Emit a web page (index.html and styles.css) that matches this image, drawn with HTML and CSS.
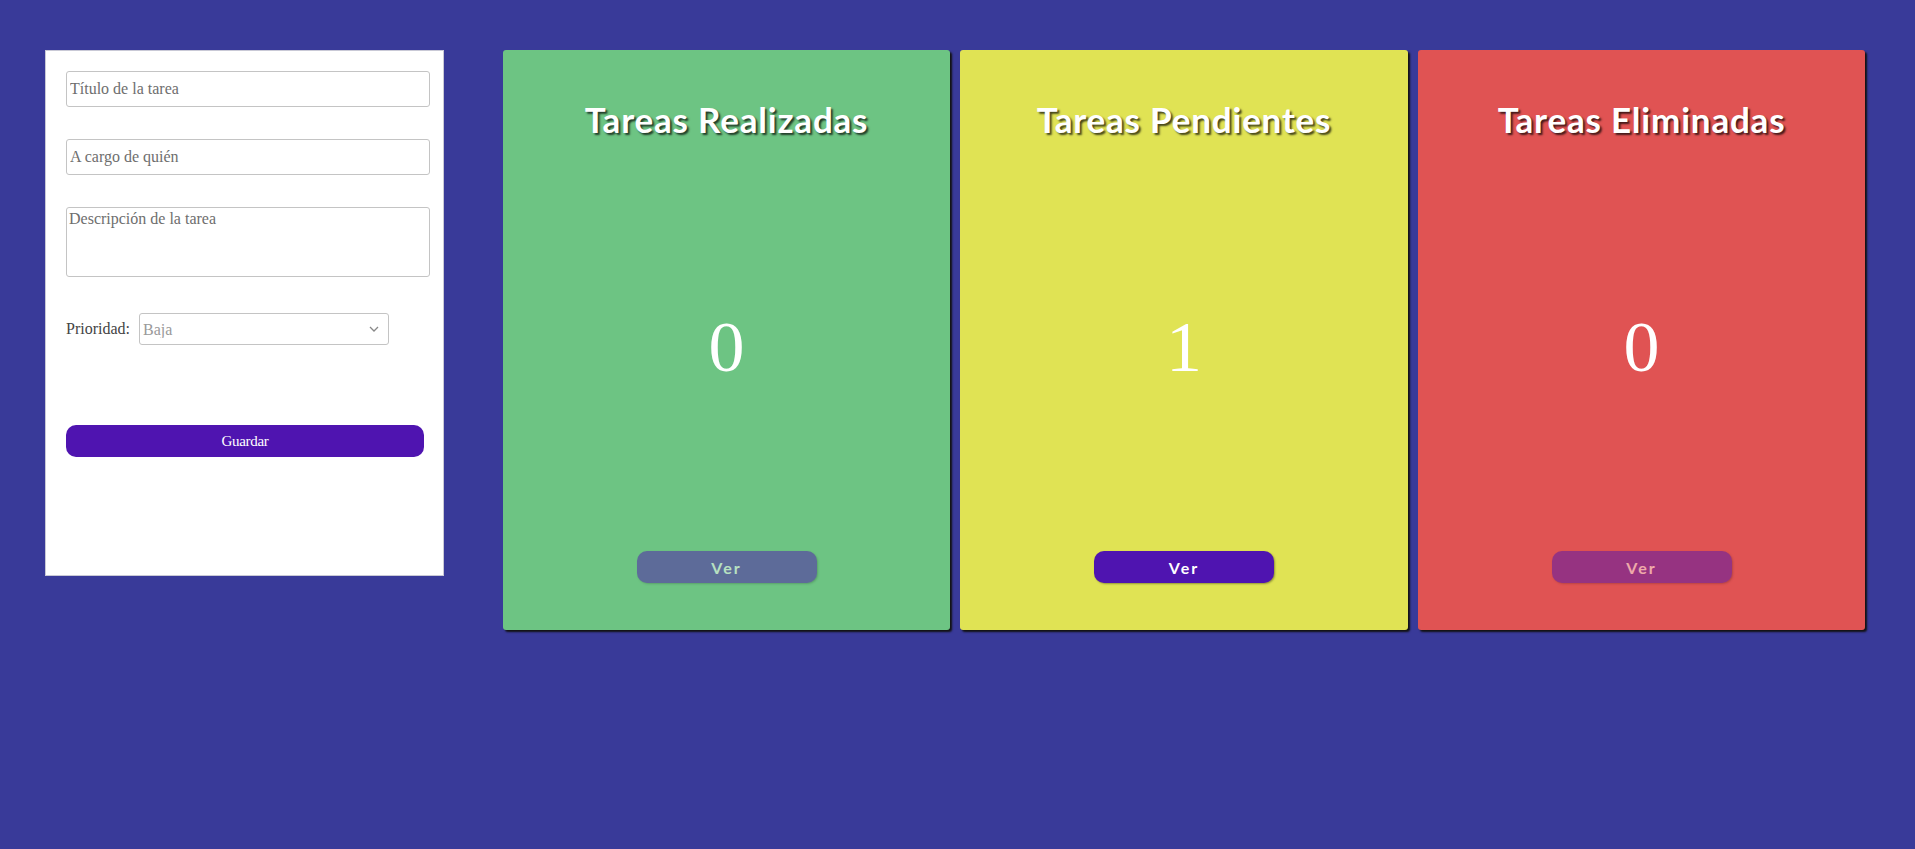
FILE: index.html
```html
<!DOCTYPE html>
<html lang="es">
<head>
<meta charset="utf-8">
<title>Tareas</title>
<link rel="stylesheet" href="styles.css">
</head>
<body>
<main class="page">
  <form class="task-form">
    <input class="field" type="text" placeholder="Título de la tarea">
    <input class="field field-2" type="text" placeholder="A cargo de quién">
    <textarea class="field area" placeholder="Descripción de la tarea"></textarea>
    <div class="priority">
      <label class="priority-label">Prioridad:</label>
      <div class="select-wrap">
        <select class="select">
          <option>Baja</option>
          <option>Media</option>
          <option>Alta</option>
        </select>
        <svg class="chev" width="10" height="6" viewBox="0 0 10 6"><path d="M1 1l4 4 4-4" fill="none" stroke="#888" stroke-width="1.3"/></svg>
      </div>
    </div>
    <button type="button" class="save">Guardar</button>
  </form>
  <section class="cards">
    <div class="card green">
      <h2 class="card-title">Tareas Realizadas</h2>
      <div class="count">0</div>
      <button type="button" class="ver disabled">Ver</button>
    </div>
    <div class="card yellow">
      <h2 class="card-title">Tareas Pendientes</h2>
      <div class="count">1</div>
      <button type="button" class="ver">Ver</button>
    </div>
    <div class="card red">
      <h2 class="card-title">Tareas Eliminadas</h2>
      <div class="count">0</div>
      <button type="button" class="ver disabled">Ver</button>
    </div>
  </section>
</main>
</body>
</html>
```
FILE: styles.css
```css
html, body {
  margin: 0;
  padding: 0;
}
body {
  background: #393a99;
  min-height: 849px;
  font-family: "Liberation Serif", "Times New Roman", serif;
}
.page {
  display: flex;
  align-items: flex-start;
  padding: 50px 0 0 45px;
}
.task-form {
  box-sizing: border-box;
  width: 399px;
  height: 526px;
  background: #fff;
  border: 1px solid #c9c9d6;
  padding: 20px 13px 0 20px;
  display: flex;
  flex-direction: column;
  align-items: flex-start;
}
.field {
  box-sizing: border-box;
  width: 364px;
  height: 36px;
  border: 1px solid #c4c4c4;
  border-radius: 3px;
  padding: 0 3px;
  font-family: "Liberation Serif", "Times New Roman", serif;
  font-size: 16px;
  color: #333;
  margin: 0 0 32px 0;
  outline: none;
}
.field::placeholder {
  color: #6e6e6e;
}
.area {
  height: 70px;
  resize: none;
  padding: 2px 2px;
  margin-bottom: 36px;
}
.priority {
  display: flex;
  align-items: center;
  height: 32px;
  margin-bottom: 80px;
}
.priority-label {
  font-size: 16px;
  color: #444;
  margin-right: 9px;
}
.select-wrap {
  position: relative;
}
.select {
  appearance: none;
  -webkit-appearance: none;
  box-sizing: border-box;
  width: 250px;
  height: 32px;
  border: 1px solid #c4c4c4;
  border-radius: 3px;
  background: #fff;
  padding: 0 3px;
  font-family: "Liberation Serif", "Times New Roman", serif;
  font-size: 16px;
  color: #9a9a9a;
  outline: none;
}
.chev {
  position: absolute;
  right: 10px;
  top: 13px;
}
.save {
  box-sizing: border-box;
  width: 358px;
  height: 32px;
  border: none;
  border-radius: 10px;
  background: #4f14b0;
  color: #fff;
  font-family: "Liberation Serif", "Times New Roman", serif;
  font-size: 15px;
  letter-spacing: -0.3px;
  cursor: pointer;
}
.cards {
  display: flex;
  gap: 10px;
  margin-left: 59px;
}
.card {
  box-sizing: border-box;
  width: 447px;
  height: 580px;
  border-radius: 3px;
  box-shadow: 2px 2px 2px #111;
  display: flex;
  flex-direction: column;
  align-items: center;
  padding: 49px 0 47px;
}
.green { background: #6dc483; }
.yellow { background: #e0e354; width: 448px; }
.red { background: #e05353; }
.card-title {
  margin: 0;
  font-family: "Comic Sans MS", "Lato", "DejaVu Sans", sans-serif;
  font-weight: 700;
  font-size: 35px;
  line-height: 41px;
  letter-spacing: 0.8px;
  color: #fff;
  text-shadow: 2px 2px 2px rgba(0, 0, 0, 0.7);
}
.count {
  flex: 1;
  display: flex;
  align-items: center;
  justify-content: center;
  font-family: "Liberation Serif", "Times New Roman", serif;
  font-size: 72px;
  color: #fff;
  padding-top: 4px;
}
.ver {
  width: 180px;
  height: 32px;
  border: none;
  border-radius: 10px;
  background: #4f14b0;
  color: #fff;
  font-family: "Comic Sans MS", "Lato", "DejaVu Sans", sans-serif;
  font-weight: 700;
  font-size: 16px;
  letter-spacing: 2px;
  box-shadow: 1px 1px 2px rgba(0, 0, 0, 0.35);
  cursor: pointer;
}
.ver.disabled {
  opacity: 0.5;
}
```
